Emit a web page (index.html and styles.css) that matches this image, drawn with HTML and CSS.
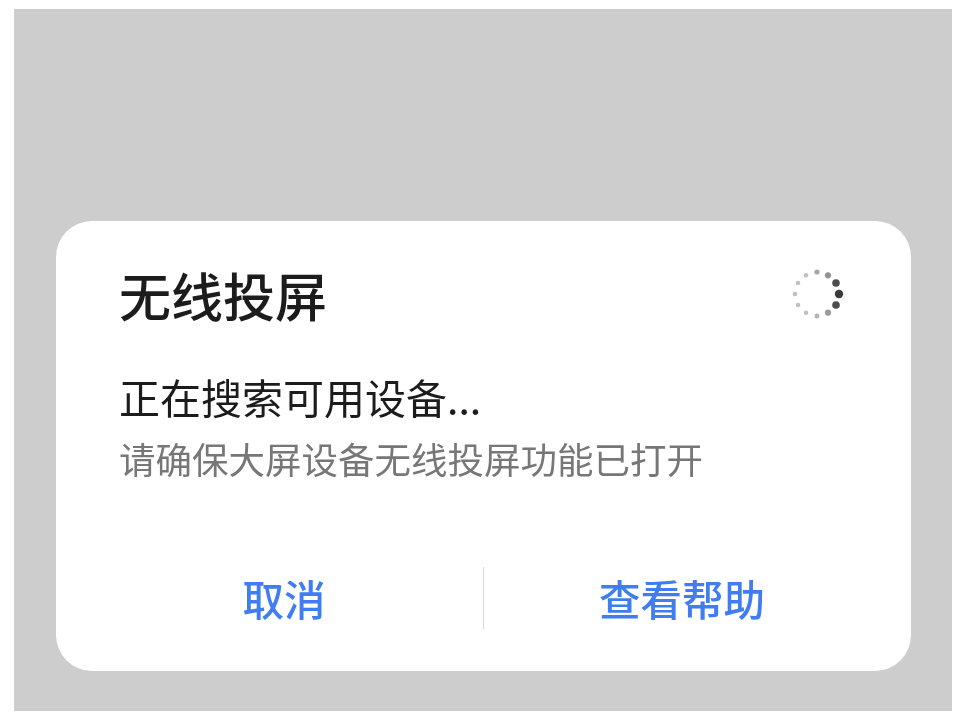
FILE: index.html
```html
<!DOCTYPE html>
<html lang="zh-CN">
<head>
<meta charset="utf-8">
<title>无线投屏</title>
<link rel="stylesheet" href="styles.css">
</head>
<body>
<main class="backdrop">
  <section class="dialog">
    <header class="head">
      <h1 class="title">无线投屏</h1>
      <svg class="spinner" width="54" height="54" viewBox="0 0 54 54" aria-hidden="true">
        <g fill="#3a3a3a">
          <circle cx="49" cy="27" r="4.2"/>
          <circle cx="46" cy="16" r="3.8" opacity=".9"/>
          <circle cx="38" cy="8.300" r="3.100" opacity=".55"/>
          <circle cx="27" cy="5" r="2.600" opacity=".45"/>
          <circle cx="16" cy="8.300" r="2.300" opacity=".32"/>
          <circle cx="8" cy="16" r="2.300" opacity=".32"/>
          <circle cx="5" cy="27" r="2.300" opacity=".32"/>
          <circle cx="8" cy="38" r="2.300" opacity=".32"/>
          <circle cx="16" cy="45.700" r="2.300" opacity=".32"/>
          <circle cx="27" cy="49" r="2.500" opacity=".38"/>
          <circle cx="38" cy="45.700" r="3.100" opacity=".5"/>
          <circle cx="46" cy="38" r="3.800" opacity=".9"/>
        </g>
      </svg>
    </header>
    <p class="status">正在搜索可用设备...</p>
    <p class="hint">请确保大屏设备无线投屏功能已打开</p>
    <footer class="actions">
      <button class="action" type="button">取消</button>
      <span class="divider"></span>
      <button class="action" type="button">查看帮助</button>
    </footer>
  </section>
</main>
</body>
</html>
```

FILE: styles.css
```css
* { box-sizing: border-box; }
html, body { height: 100%; }
body {
  margin: 0;
  padding: 9px 8px 7px 14px;
  background: #fff;
  font-family: "Noto Sans CJK SC", "Liberation Sans", sans-serif;
  overflow: hidden;
}
.backdrop {
  height: 702px;
  background: #cdcdcd;
  padding: 212px 41px 40px 42px;
}
.dialog {
  height: 450px;
  background: #fff;
  border-radius: 36px;
  padding: 44px 67px 42px 63px;
  display: flex;
  flex-direction: column;
  filter: blur(0.4px);
}
.head {
  display: flex;
  justify-content: space-between;
  align-items: flex-start;
  height: 60px;
}
.title {
  margin: 0;
  font-size: 52px;
  line-height: 60px;
  font-weight: 500;
  color: #1c1c1c;
}
.spinner { margin-top: 2px; }
.status {
  margin: 46px 0 0;
  font-size: 41px;
  line-height: 50px;
  color: #1c1c1c;
}
.hint {
  margin: 15px 0 0;
  font-size: 36.5px;
  line-height: 46px;
  color: #777;
}
.actions {
  margin: auto -67px 0 -63px;
  padding: 0 31px 0 29px;
  display: grid;
  grid-template-columns: 398px 1px 396px;
  align-items: center;
  height: 62px;
}
.action {
  border: 0;
  padding: 0;
  background: none;
  font: inherit;
  font-size: 41.5px;
  line-height: 62px;
  font-weight: 500;
  color: #3f7df0;
}
.divider {
  height: 62px;
  background: #d8d8d8;
}
```
